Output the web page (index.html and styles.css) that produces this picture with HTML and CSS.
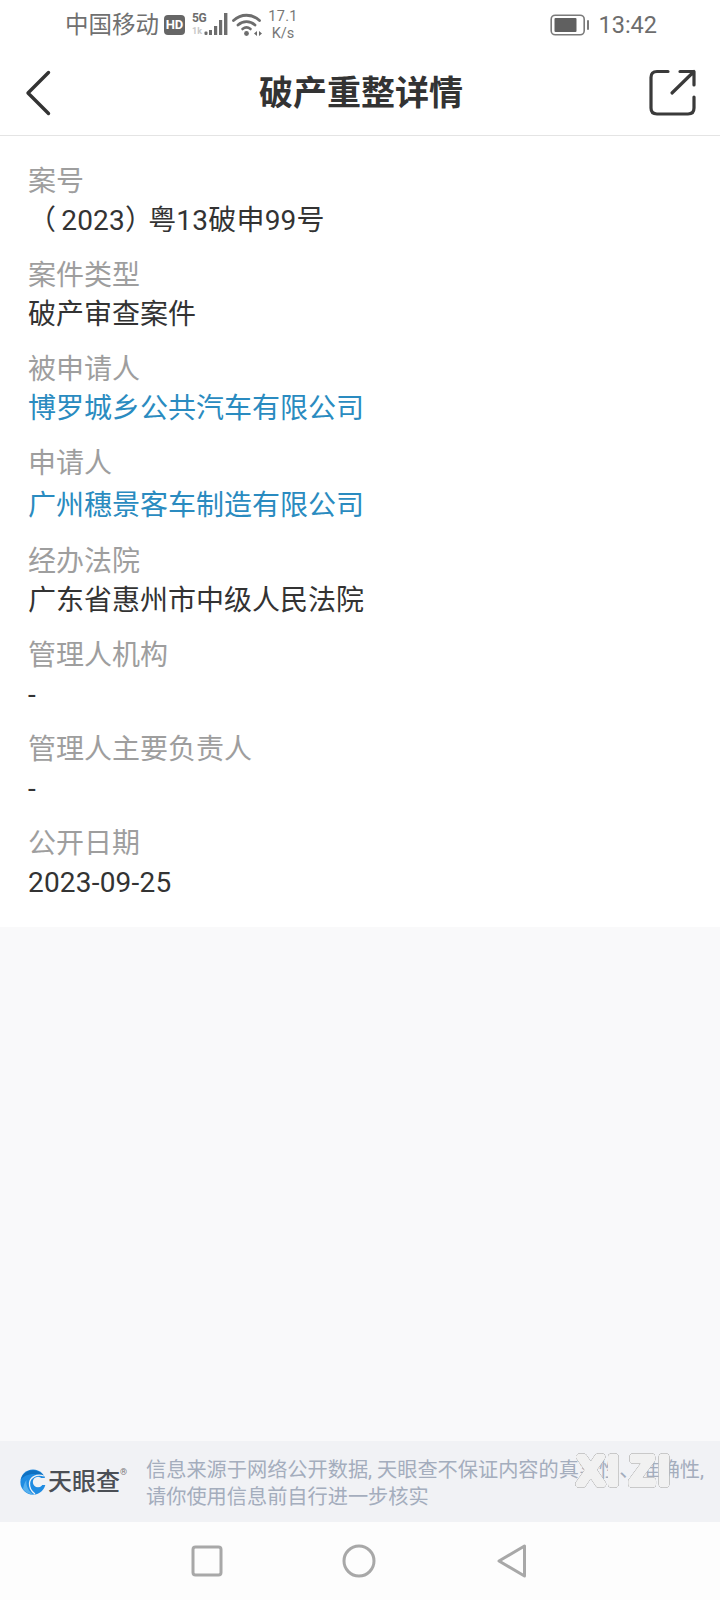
FILE: index.html
```html
<!DOCTYPE html>
<html lang="zh-CN">
<head>
<meta charset="utf-8">
<title>破产重整详情</title>
<link rel="stylesheet" href="styles.css">
</head>
<body>
<div class="phone">
  <div class="status">
    <div class="status-left">
      <span class="carrier">中国移动</span>
      <span class="hd">HD</span>
      <svg class="signal" width="37" height="24" viewBox="0 0 37 24">
        <text x="1" y="9" class="five-g">5G</text>
        <text x="1" y="21" class="one-k">1k</text>
        <rect x="13.5" y="18.5" width="3" height="3.5" rx="1" fill="#6d6d6d"/>
        <rect x="18" y="17" width="3" height="5" fill="#6d6d6d"/>
        <rect x="23" y="13" width="3.2" height="9" fill="#6d6d6d"/>
        <rect x="28" y="7" width="3.2" height="15" fill="#6d6d6d"/>
        <rect x="33" y="0" width="3.4" height="22" fill="#6d6d6d"/>
      </svg>
      <svg class="wifi" width="30" height="24" viewBox="0 0 30 24" fill="none" stroke="#6d6d6d" stroke-linecap="round">
        <path d="M1.5 7.5 C9 0.5 20 0.5 27.5 7.5" stroke-width="2.8"/>
        <path d="M6 12 C11 7.5 18 7.5 23 12" stroke-width="2.8"/>
        <path d="M10.5 16 C13 14 16 14 18.5 16" stroke-width="2.6"/>
        <circle cx="14.5" cy="20.5" r="2.4" fill="#6d6d6d" stroke="none"/>
        <path d="M22 20.5 l3 -2.6 v5.2 z M30 20.5 l-3 -2.6 v5.2 z" fill="#6d6d6d" stroke="none"/>
      </svg>
      <span class="speed"><span class="speed-value">17.1</span><br>K/s</span>
    </div>
    <div class="status-right">
      <svg width="40" height="24" viewBox="0 0 40 24">
        <rect x="1.2" y="2.2" width="33" height="19.6" rx="4" fill="none" stroke="#7a7a7a" stroke-width="1.6"/>
        <rect x="4.5" y="5" width="22" height="14" rx="1" fill="#606060"/>
        <rect x="37" y="7" width="2" height="10" rx="1" fill="#7a7a7a"/>
      </svg>
      <span class="clock">13:42</span>
    </div>
  </div>

  <header class="nav">
    <svg class="back" width="28" height="46" viewBox="0 0 28 46" fill="none" stroke="#333" stroke-width="3.4" stroke-linecap="round" stroke-linejoin="round">
      <path d="M23.5 2.5 L3 23 L23.5 43.5"/>
    </svg>
    <h1 class="title">破产重整详情</h1>
    <svg class="share" width="48" height="48" viewBox="0 0 48 48" fill="none" stroke="#3a3a3a" stroke-width="3.2" stroke-linecap="round" stroke-linejoin="round">
      <path d="M19 2.5 H8 Q2 2.5 2 8.5 V39 Q2 45 8 45 H39 Q45 45 45 39 V28"/>
      <path d="M23 24 L45 2.5 M31 2.5 H45 V16"/>
    </svg>
  </header>

  <main class="details">
    <div class="item"><div class="label">案号</div><div class="value num">（<span class="year">2023）</span>粤13破申99号</div></div>
    <div class="item"><div class="label">案件类型</div><div class="value">破产审查案件</div></div>
    <div class="item"><div class="label">被申请人</div><div class="value link">博罗城乡公共汽车有限公司</div></div>
    <div class="item item-wide"><div class="label">申请人</div><div class="value link">广州穗景客车制造有限公司</div></div>
    <div class="item"><div class="label">经办法院</div><div class="value">广东省惠州市中级人民法院</div></div>
    <div class="item"><div class="label">管理人机构</div><div class="value">-</div></div>
    <div class="item"><div class="label">管理人主要负责人</div><div class="value">-</div></div>
    <div class="item"><div class="label">公开日期</div><div class="value num">2023-09-25</div></div>
  </main>

  <div class="blank"></div>

  <footer class="source">
    <div class="brand">
      <svg width="26" height="26" viewBox="0 0 26 26">
        <circle cx="13" cy="13" r="12.6" fill="#1f8ce2"/>
        <path d="M24.5 7.5 C20 0 8 -1.5 2.5 6.5 C1.5 8.5 1 10 0.6 11 C5 5 14 3 24.5 7.5 Z" fill="#0f70c0"/>
        <path d="M3 20 C6 24 10 25.5 14 25.5 C9 23 5.5 17 6.5 11 C4.5 13.5 3.5 17 3 20 Z" fill="#56b0ee"/>
        <path d="M24 7 C17 4.5 10 8 9.5 14 C9.2 18.5 11.5 22.5 15 25" fill="none" stroke="#f1f2f5" stroke-width="1.3"/>
        <circle cx="18" cy="13" r="5.2" fill="#f1f2f5"/>
        <path d="M18 9 H26 V16 H18 Z" fill="#f1f2f5"/>
      </svg>
      <span class="brand-name">天眼查</span><span class="reg">®</span>
    </div>
    <p class="notice">信息来源于网络公开数据, 天眼查不保证内容的真实性、准确性,<br>请你使用信息前自行进一步核实</p>
    <svg class="stamp" width="100" height="40" viewBox="0 0 100 40">
      <text x="8 38 60.5 88.7" y="33.5" class="stamp-text">XIZI</text>
    </svg>
  </footer>

  <nav class="softkeys">
    <svg width="32" height="32" viewBox="0 0 32 32"><rect x="2" y="2" width="28" height="28" rx="2.5" fill="none" stroke="#a8a8a8" stroke-width="3"/></svg>
    <svg width="34" height="34" viewBox="0 0 34 34"><circle cx="17" cy="17" r="15" fill="none" stroke="#a8a8a8" stroke-width="3"/></svg>
    <svg width="30" height="34" viewBox="0 0 30 34"><path d="M27.5 2 V32 L2 17 Z" fill="none" stroke="#a8a8a8" stroke-width="3" stroke-linejoin="round"/></svg>
  </nav>
</div>
</body>
</html>
```
FILE: styles.css
```css
* { box-sizing: border-box; }
html, body { margin: 0; padding: 0; }
body {
  background: #fff;
  font-family: "Roboto", "Noto Sans CJK SC", sans-serif;
}
.phone {
  width: 720px;
  height: 1600px;
  display: flex;
  flex-direction: column;
  background: #f9f9fa;
}

/* status bar */
.status {
  height: 50px;
  padding: 0 63px 0 65px;
  background: #fff;
  display: flex;
  justify-content: space-between;
  align-items: center;
  color: #6d6d6d;
}
.status-left, .status-right { display: flex; align-items: center; }
.carrier { font-size: 23.5px; line-height: 30px; color: #707070; }
.hd {
  margin-left: 5px;
  width: 21px;
  height: 20px;
  border-radius: 4px;
  background: #666;
  color: #fff;
  font: 700 13px/20px "Roboto", sans-serif;
  text-align: center;
}
.signal { margin-left: 6px; overflow: visible; }
.five-g { font: 700 12px "Roboto", sans-serif; fill: #6d6d6d; letter-spacing: -0.4px; }
.one-k { font: 700 9px "Roboto", sans-serif; fill: #c8c8c8; }
.wifi { margin-left: 4px; overflow: visible; }
.speed {
  margin-left: 6px;
  width: 30px;
  font-size: 14.5px;
  line-height: 18px;
  text-align: center;
  color: #777;
}
.speed-value { position: relative; top: 1px; letter-spacing: 0.3px; }
.clock { margin-left: 8px; font-size: 23.5px; color: #6d6d6d; }

/* title bar */
.nav {
  height: 86px;
  padding: 0 23px 0 25px;
  background: #fff;
  border-bottom: 1px solid #e4e4e4;
  display: grid;
  grid-template-columns: 1fr auto 1fr;
  align-items: center;
}
.share { justify-self: end; }
.title {
  margin: 0;
  font-size: 34px;
  line-height: 46px;
  font-weight: 700;
  color: #333;
}

/* detail rows */
.details {
  padding: 26px 28px 9px;
  background: #fff;
}
.item { height: 94px; }
.item-wide { height: 98px; }
.label {
  font-size: 28px;
  line-height: 39px;
  color: #9e9e9e;
}
.value {
  font-size: 28px;
  line-height: 39px;
  color: #333;
}
.num { letter-spacing: 0.2px; }
.year { margin: 0 -5px 0 5px; }
.item-wide .value { margin-top: 3px; }
.link { color: #2a8bc0; }
.blank { flex: 1; }

/* data source notice */
.source {
  position: relative;
  height: 81px;
  padding-left: 20px;
  background: #f1f2f5;
  display: flex;
  align-items: center;
}
.brand { width: 126px; display: flex; align-items: center; }
.brand-name {
  margin-left: 2px;
  font-size: 24px;
  font-weight: 500;
  line-height: 30px;
  color: #4b4f55;
}
.reg { align-self: flex-start; margin-top: 0; font-size: 9px; color: #777; }
.notice {
  margin: 4px 0 0;
  font-size: 20.2px;
  line-height: 27px;
  color: #a4adbd;
  white-space: nowrap;
}
.stamp {
  position: absolute;
  left: 570px;
  top: 9px;
  overflow: visible;
  filter: drop-shadow(0 0 0.5px #777) drop-shadow(0 0 0.3px #999);
}
.stamp-text {
  font: 400 38px "Liberation Sans", sans-serif;
  fill: #fff;
  stroke: #fff;
  stroke-width: 7px;
  stroke-linejoin: round;
  stroke-linecap: round;
  opacity: 0.9;
}

/* system navigation */
.softkeys {
  height: 78px;
  padding-left: 191px;
  background: #fdfdfd;
  display: flex;
  align-items: center;
  gap: 119px;
}
.softkeys svg:last-child { margin-left: 2px; }
```
